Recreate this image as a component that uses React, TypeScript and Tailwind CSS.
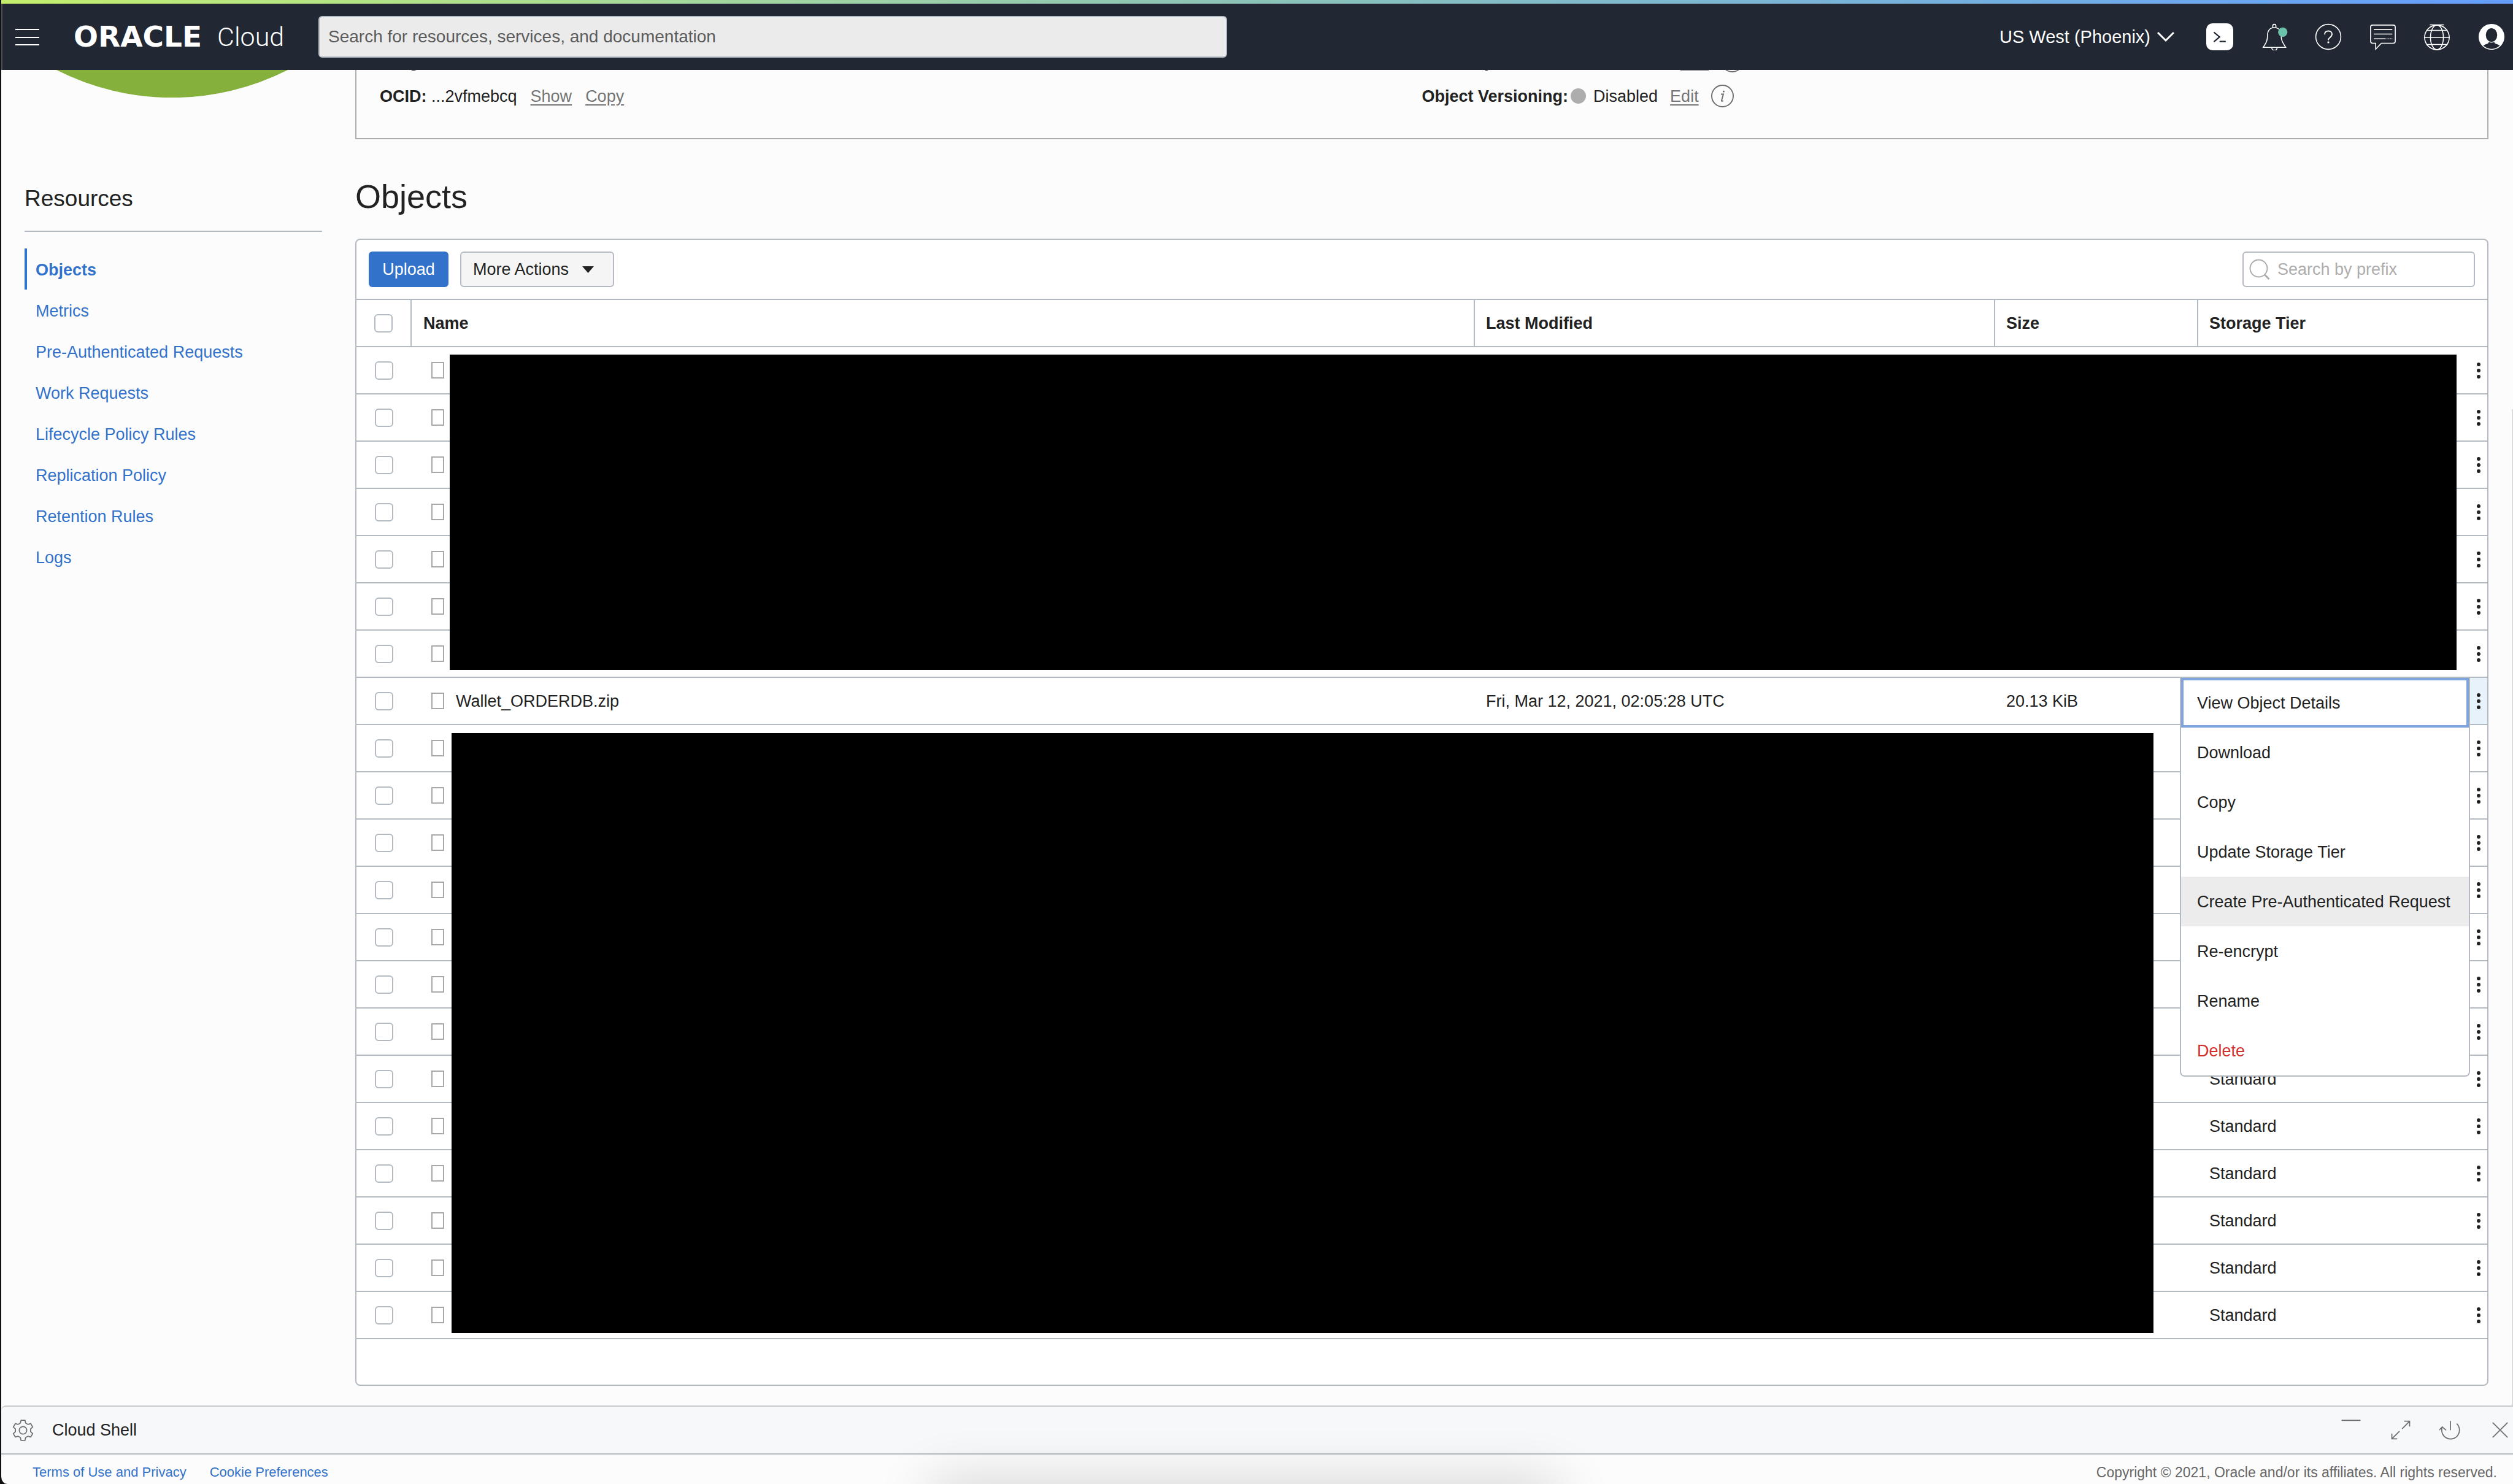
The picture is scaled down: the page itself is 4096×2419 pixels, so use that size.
import React from "react";

const NAV_LINKS = [
  "Objects",
  "Metrics",
  "Pre-Authenticated Requests",
  "Work Requests",
  "Lifecycle Policy Rules",
  "Replication Policy",
  "Retention Rules",
  "Logs",
];

const MENU_ITEMS = [
  "View Object Details",
  "Download",
  "Copy",
  "Update Storage Tier",
  "Create Pre-Authenticated Request",
  "Re-encrypt",
  "Rename",
  "Delete",
];

type ObjectRow = { name: string; modified: string; size: string; tier: string; open: boolean };

const ROWS: ObjectRow[] = Array.from({ length: 21 }, (_, i) =>
  i === 7
    ? {
        name: "Wallet_ORDERDB.zip",
        modified: "Fri, Mar 12, 2021, 02:05:28 UTC",
        size: "20.13 KiB",
        tier: "",
        open: true,
      }
    : { name: "", modified: "", size: "", tier: i >= 15 ? "Standard" : "", open: false },
);

function HeaderIcon({ label, children }: { label: string; children: React.ReactNode }) {
  return (
    <button type="button" aria-label={label} className="h-[44px] w-[44px] shrink-0">
      <svg viewBox="0 0 138 138" className="h-full w-full" fill="none" stroke="#fff" strokeWidth="5">
        {children}
      </svg>
    </button>
  );
}

function ShellIcon({ label, children }: { label: string; children: React.ReactNode }) {
  return (
    <button type="button" aria-label={label} className="h-[36px] w-[36px] shrink-0">
      <svg viewBox="0 0 112 112" className="h-full w-full" fill="none" stroke="#6f7072" strokeWidth="5.5">
        {children}
      </svg>
    </button>
  );
}

function gearPath() {
  const points: string[] = [];
  for (let i = 0; i < 6; i++) {
    const base = -90 + i * 60;
    const corners: [number, number][] = [
      [-20, 43],
      [-11, 57],
      [11, 57],
      [20, 43],
    ];
    for (const [offset, radius] of corners) {
      const a = ((base + offset) * Math.PI) / 180;
      points.push(`${(60 + radius * Math.cos(a)).toFixed(1)} ${(60 + radius * Math.sin(a)).toFixed(1)}`);
    }
  }
  return `M${points.join("L")}Z`;
}

function InfoIcon() {
  return (
    <svg viewBox="0 0 38 38" className="h-[37px] w-[37px]" fill="none" stroke="#6f6f6f" strokeWidth="2">
      <circle cx="19" cy="19" r="18" />
      <path d="M16.5 16h4l-3 10.500q-.6 2 2.600.3" strokeWidth="2" />
      <circle cx="21" cy="11.500" r="1.500" fill="#6f6f6f" stroke="none" />
    </svg>
  );
}

function Setting({ label }: { label: string }) {
  return (
    <div className="flex h-[57px] items-center">
      <span className="font-bold">{label}</span>
      <span className="ml-1 h-[25px] w-[25px] rounded-full bg-[#adadad]" />
      <span className="ml-3">Disabled</span>
      <a href="#edit" className="ml-5 text-[#757575] underline underline-offset-4">
        Edit
      </a>
      <span className="ml-5">
        <InfoIcon />
      </span>
    </div>
  );
}

function TopBar() {
  return (
    <header className="relative z-10 text-white">
      <div className="h-[6px] bg-gradient-to-r from-[#c3ee6a] via-[#8cc3b8] to-[#659ffb]" />
      <div className="flex h-[108px] items-center border-l-2 border-[#4b515c] bg-[#212833] pr-[13px]">
        <button type="button" aria-label="Navigation menu" className="ml-[21px] h-[28px] w-[39px]">
          <svg viewBox="0 0 39 28" className="h-full w-full" stroke="#fff" strokeWidth="2">
            <path d="M0 2h39M0 15h39M0 27h39" />
          </svg>
        </button>
        <a href="#home" className="ml-[56px] flex w-[399px] items-center leading-[48px]">
          <span className="w-[234px] font-['DejaVu_Sans'] text-[47px] font-bold">ORACLE</span>
          <span className="font-['Roboto'] text-[43px] font-light">Cloud</span>
        </a>
        <input
          type="text"
          aria-label="Search"
          placeholder="Search for resources, services, and documentation"
          className="h-[68px] w-[1481px] rounded-md border-2 border-[#b4bac1] bg-[#ebebeb] px-[14px] text-[28px] text-[#222] placeholder:text-[#5c5c5c]"
        />
        <div className="grow" />
        <button type="button" className="mr-[52px] flex items-center gap-[11px] text-[29px]">
          US West (Phoenix)
          <svg viewBox="0 0 28 18" className="h-[18px] w-[28px]" fill="none" stroke="#fff" strokeWidth="3">
            <path d="M1 2l13 13L27 2" />
          </svg>
        </button>
        <div className="flex w-[487px] justify-between">
          <HeaderIcon label="Cloud Shell">
            <rect width="138" height="138" rx="32" fill="#fff" stroke="none" />
            <path d="M41 47l27 23-27 23M71 93h26" stroke="#212833" strokeWidth="7" strokeLinecap="round" />
          </HeaderIcon>
          <HeaderIcon label="Announcements">
            <path d="M61 22V13a8 8 0 0 1 16 0v9" />
            <path d="M12 123C28 98 34 88 34 64C34 36 48 22 69 22C90 22 104 36 104 64C104 88 112 98 127 123Z" />
            <path d="M56 125a13.500 13.500 0 0 0 27 0" />
            <circle cx="112" cy="45" r="24" fill="#6cc2aa" stroke="none" />
          </HeaderIcon>
          <HeaderIcon label="Help">
            <circle cx="69" cy="69" r="64" />
            <path d="M50 57C50 46 58 39 69 39C80 39 88 46 88 56C88 71 69 71 69 86" strokeWidth="6" />
            <circle cx="69" cy="97" r="5" fill="#fff" stroke="none" />
          </HeaderIcon>
          <HeaderIcon label="Chat">
            <path d="M16 9H122Q132 9 132 19V92Q132 102 122 102H61L32 132V102H16Q6 102 6 92V19Q6 9 16 9Z" />
            <path d="M22 31H117M22 55H117M22 79H83M88 79h4M97 79h4M105 79h4M113 79h4" />
          </HeaderIcon>
          <HeaderIcon label="Language">
            <circle cx="69" cy="72" r="63" />
            <ellipse cx="69" cy="72" rx="33" ry="63" />
            <path d="M15 36H123M3 72H135M15 108H123M33 8H105" />
          </HeaderIcon>
          <HeaderIcon label="Profile">
            <circle cx="69" cy="69" r="66" fill="#fff" stroke="none" />
            <ellipse cx="69" cy="60" rx="29" ry="35" fill="#212833" stroke="none" />
            <path
              d="M27 114C40 103 55 107 55 94Q69 104 83 94C83 107 98 103 111 114A61 61 0 0 1 27 114Z"
              fill="#212833"
              stroke="none"
            />
          </HeaderIcon>
        </div>
      </div>
    </header>
  );
}

function Sidebar() {
  return (
    <aside className="ml-[38px] w-[485px] shrink-0">
      <svg viewBox="0 0 377 45" className="ml-[52px] h-[45px] w-[377px]">
        <path d="M0 0A416 416 0 0 0 377 0Z" fill="#86b03c" />
      </svg>
      <h2 className="mt-[141px] border-b-2 border-[#b4bac1] pb-[28px] text-[37px] leading-[48px]">Resources</h2>
      <nav className="mt-[27px] flex flex-col">
        {NAV_LINKS.map((item, i) => (
          <a
            key={item}
            href={`#${item}`}
            className={
              i === 0
                ? "flex h-[67px] items-center border-l-4 border-[#3272ca] pt-[2px] pl-[14px] font-bold text-[#3272ca]"
                : "flex h-[67px] items-center pt-[2px] pl-[18px] text-[#3272ca]"
            }
          >
            {item}
          </a>
        ))}
      </nav>
    </aside>
  );
}

function ActionsMenu() {
  return (
    <div
      role="menu"
      className="absolute top-0 right-full z-10 w-[473px] overflow-hidden rounded-b-lg border-2 border-t-0 border-[#b4bac1] bg-white"
    >
      {MENU_ITEMS.map((item, i) => (
        <button
          key={item}
          type="button"
          role="menuitem"
          className={
            i === 0
              ? "block h-[81px] w-full border-4 border-[#7fa3dc] pl-[22px] text-left"
              : i === 4
                ? "block h-[81px] w-full bg-[#ececec] pl-[26px] text-left"
                : i === 7
                  ? "block h-[81px] w-full pl-[26px] text-left text-[#d32f2f]"
                  : "block h-[81px] w-full pl-[26px] text-left"
          }
        >
          {item}
        </button>
      ))}
    </div>
  );
}

function Checkbox({ label }: { label: string }) {
  return (
    <input
      type="checkbox"
      aria-label={label}
      className="mx-auto block h-[30px] w-[30px] appearance-none rounded-md border-2 border-[#b4bac1] bg-white"
    />
  );
}

function ObjectsTable() {
  return (
    <div className="relative">
      <table className="w-full table-fixed border-separate border-spacing-0 text-left">
        <colgroup>
          <col className="w-[90px]" />
          <col />
          <col className="w-[848px]" />
          <col className="w-[331px]" />
          <col className="w-[443px]" />
          <col className="w-[28px]" />
        </colgroup>
        <thead>
          <tr className="h-[77px]">
            <th className="border-r-2 border-b-2 border-[#b4bac1] p-0">
              <Checkbox label="Select all objects" />
            </th>
            <th className="border-r-2 border-b-2 border-[#b4bac1] py-0 pl-[19px]">Name</th>
            <th className="border-r-2 border-b-2 border-[#b4bac1] py-0 pl-[18px]">Last Modified</th>
            <th className="border-r-2 border-b-2 border-[#b4bac1] py-0 pl-[18px]">Size</th>
            <th colSpan={2} className="border-b-2 border-[#b4bac1] py-0 pl-[18px]">
              Storage Tier
            </th>
          </tr>
        </thead>
        <tbody>
          {ROWS.map((row, i) => (
            <tr key={i} className="h-[77px]">
              <td className="border-b-2 border-[#b4bac1] p-0">
                <Checkbox label={`Select object ${i + 1}`} />
              </td>
              <td className="border-b-2 border-[#b4bac1] py-0 pl-8">
                <div className="flex items-center gap-[19px]">
                  <span className="h-[27px] w-[21px] shrink-0 border-2 border-[#a8a8a8]" />
                  {row.name}
                </div>
              </td>
              <td className="border-b-2 border-[#b4bac1] py-0 pl-[18px]">{row.modified}</td>
              <td className="border-b-2 border-[#b4bac1] py-0 pl-[18px]">{row.size}</td>
              <td className="border-b-2 border-[#b4bac1] py-0 pl-[18px]">{row.tier}</td>
              <td
                className={
                  row.open
                    ? "relative border-b-2 border-[#b4bac1] bg-[#e7f2fb] p-0"
                    : "border-b-2 border-[#b4bac1] p-0"
                }
              >
                <button type="button" aria-label="Actions" className="block h-[28px] w-[28px]">
                  <svg viewBox="0 0 28 28" className="h-full w-full" fill="#222">
                    <circle cx="14" cy="4" r="3" />
                    <circle cx="14" cy="14" r="3" />
                    <circle cx="14" cy="24" r="3" />
                  </svg>
                </button>
                {row.open && <ActionsMenu />}
              </td>
            </tr>
          ))}
        </tbody>
      </table>
      <div className="absolute top-[89px] right-[50px] left-[152px] h-[514px] bg-black" />
      <div className="absolute top-[706px] right-[544px] left-[155px] h-[978px] bg-black" />
    </div>
  );
}

function ObjectsSection() {
  return (
    <section className="mr-[40px] ml-[54px] min-w-0 grow">
      <div className="-mt-[43px] grid grid-cols-2 border-2 border-t-0 border-[#adadad] pb-[40px]">
        <div className="pl-[38px]">
          <div className="flex h-[57px] items-center font-bold">ETag:</div>
          <div className="flex h-[57px] items-center gap-[22px]">
            <span>
              <b>OCID:</b> ...2vfmebcq
            </span>
            <a href="#show" className="text-[#757575] underline underline-offset-4">
              Show
            </a>
            <a href="#copy" className="text-[#757575] underline underline-offset-4">
              Copy
            </a>
          </div>
        </div>
        <div>
          <Setting label="Emit Object Events:" />
          <Setting label="Object Versioning:" />
        </div>
      </div>

      <h1 className="mt-[61px] text-[54px] leading-[64px]">Objects</h1>

      <div className="mt-[37px] rounded-lg border-2 border-[#b4bac1] bg-white">
        <div className="flex h-[98px] items-center gap-[19px] border-b-2 border-[#b4bac1] px-5">
          <button type="button" className="h-[58px] w-[130px] rounded-md bg-[#3272ca] text-white">
            Upload
          </button>
          <button
            type="button"
            className="flex h-[58px] w-[251px] items-center gap-[22px] rounded-md border-2 border-[#b4bac1] bg-[#f5f5f5] pl-[19px]"
          >
            More Actions
            <svg viewBox="0 0 19 11" className="h-[11px] w-[19px]" fill="#222">
              <path d="M0 0h19L9.500 11z" />
            </svg>
          </button>
          <label className="ml-auto flex h-[58px] w-[379px] items-center gap-3 rounded-md border-2 border-[#b4bac1] bg-white pl-[9px]">
            <svg viewBox="0 0 34 34" className="h-[34px] w-[34px] shrink-0" fill="none" stroke="#adadad" strokeWidth="2">
              <circle cx="15.500" cy="15.500" r="14" />
              <path d="M25.500 26l7 7" strokeWidth="3" />
            </svg>
            <input
              type="text"
              aria-label="Search by prefix"
              placeholder="Search by prefix"
              className="min-w-0 grow bg-transparent placeholder:text-[#adadad]"
            />
          </label>
        </div>
        <ObjectsTable />
        <div className="h-[74px]" />
      </div>
    </section>
  );
}

function CloudShellBar() {
  return (
    <div className="mt-[32px] flex h-[80px] items-center rounded-tl-lg border-t-2 border-b-2 border-t-[#c8c9cb] border-b-[#b4bac1] bg-[#f7f8fa] pr-[3px] pl-[18px]">
      <button type="button" aria-label="Settings" className="h-[35px] w-[35px]">
        <svg viewBox="0 0 120 120" className="h-full w-full" fill="none" stroke="#6f7072" strokeWidth="6">
          <path d={gearPath()} />
          <circle cx="60" cy="60" r="21" />
        </svg>
      </button>
      <span className="ml-[30px]">Cloud Shell</span>
      <div className="ml-auto flex gap-[45px]">
        <ShellIcon label="Minimize">
          <path d="M8 7h96" strokeWidth="6" />
        </ShellIcon>
        <ShellIcon label="Maximize">
          <path d="M63 50L101 11M74 11H101V38M50 62L11 101M11 74V101H38" />
        </ShellIcon>
        <ShellIcon label="Restart">
          <path d="M56 10V57M88 24A45 45 0 1 1 14 43M-2 57L15 40L34 57" />
        </ShellIcon>
        <ShellIcon label="Close">
          <path d="M18 18L94 94M94 18L18 94" />
        </ShellIcon>
      </div>
    </div>
  );
}

export default function App() {
  return (
    <div className="min-h-screen bg-[#111]">
      <div className="relative flex min-h-screen flex-col overflow-hidden rounded-bl-xl border-l-2 border-[#111] bg-[#fcfcfc] font-['Liberation_Sans',Arial,sans-serif] text-[27px] leading-[36px] text-[#222]">
        <TopBar />
        <main className="flex">
          <Sidebar />
          <ObjectsSection />
        </main>
        <CloudShellBar />
        <footer className="flex grow gap-[38px] pt-[13px] pr-[26px] pl-[51px] text-[22px] leading-[32px]">
          <a href="#terms" className="text-[#3272ca]">
            Terms of Use and Privacy
          </a>
          <a href="#cookies" className="text-[#3272ca]">
            Cookie Preferences
          </a>
          <span className="ml-auto text-[23px] text-[#666]">
            Copyright © 2021, Oracle and/or its affiliates. All rights reserved.
          </span>
        </footer>
        <div className="pointer-events-none absolute top-full left-[37%] h-[60px] w-[25%] shadow-[0_0_90px_rgba(0,0,0,0.2)]" />
        <div className="absolute top-[667px] right-0 bottom-[128px] w-[2px] bg-[#dcdcdc]" />
      </div>
    </div>
  );
}
